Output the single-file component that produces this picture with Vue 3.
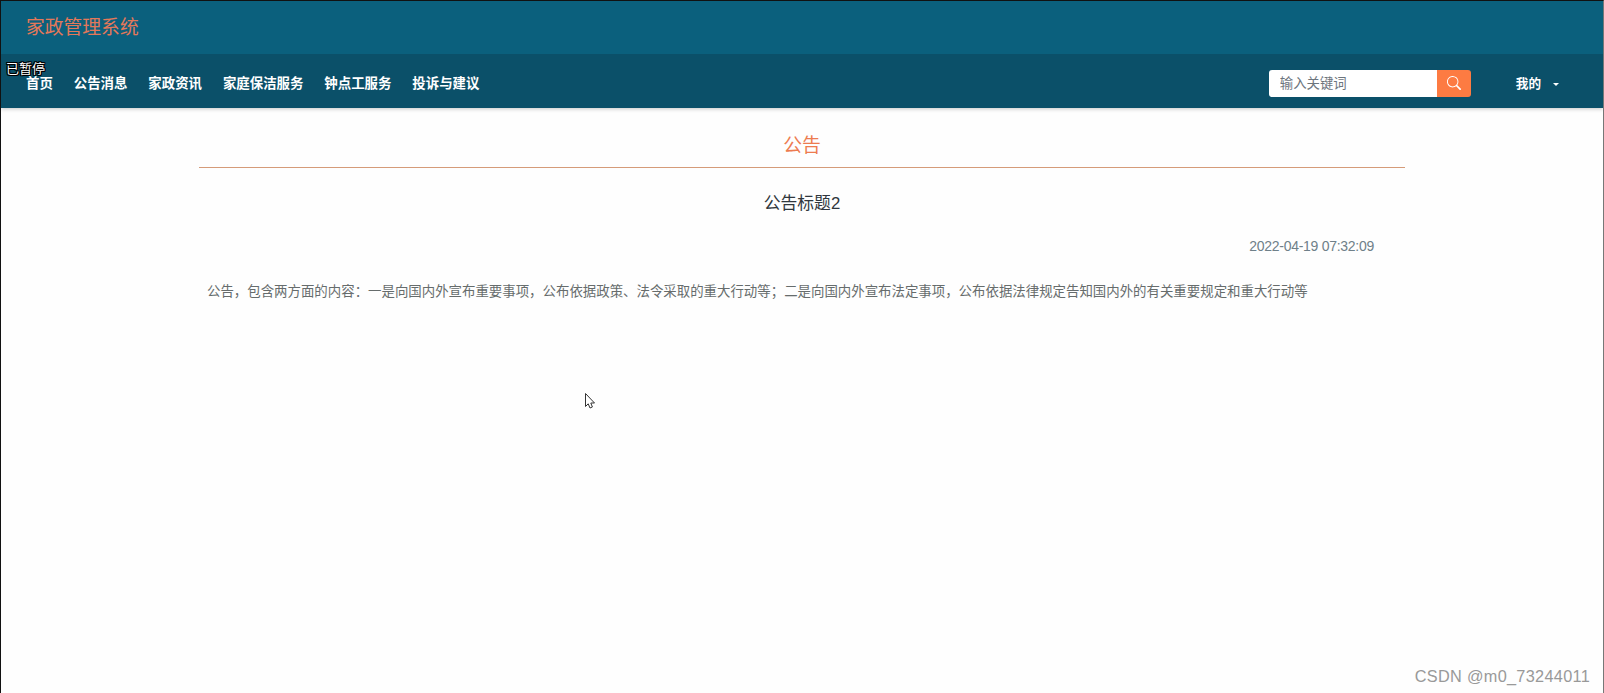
<script setup>
import { ref } from "vue";

const keyword = ref("");

const menu = ["首页", "公告消息", "家政资讯", "家庭保洁服务", "钟点工服务", "投诉与建议"];

const notice = {
    title: "公告标题2",
    created_at: "2022-04-19 07:32:09",
    content: "公告，包含两方面的内容：一是向国内外宣布重要事项，公布依据政策、法令采取的重大行动等；二是向国内外宣布法定事项，公布依据法律规定告知国内外的有关重要规定和重大行动等",
};
</script>

<template>
    <div class="page">
        <header class="header">
            <div class="brand">家政管理系统</div>
            <nav class="navbar">
                <a v-for="item in menu" :key="item" class="nav-link">{{ item }}</a>

                <div class="search">
                    <input v-model="keyword" class="search-input" type="text" placeholder="输入关键词">
                    <button class="search-btn">
                        <svg width="14" height="14" viewBox="0 0 16 16" fill="currentColor">
                            <path d="M11.742 10.344a6.5 6.5 0 1 0-1.397 1.398h-.001c.03.04.062.078.098.115l3.85 3.85a1 1 0 0 0 1.415-1.414l-3.85-3.85a1.007 1.007 0 0 0-.115-.1zM12 6.5a5.5 5.5 0 1 1-11 0 5.5 5.5 0 0 1 11 0z" />
                        </svg>
                    </button>
                </div>

                <a class="user">我的<span class="caret"></span></a>
            </nav>
        </header>

        <!-- 公告详情 -->
        <main class="container">
            <h1 class="heading">公告</h1>
            <h2 class="title">{{ notice.title }}</h2>
            <div class="time">{{ notice.created_at }}</div>
            <p class="content">{{ notice.content }}</p>
        </main>

        <div class="paused">已暂停</div>
        <svg class="cursor" width="12" height="18" viewBox="0 0 12 18">
            <path d="M1.500 1.500V14.500L4.200 11.800L6 16L8.400 15L6.800 11H10.500Z" fill="#fff" stroke="#333" stroke-width="1" />
        </svg>
        <div class="watermark">CSDN @m0_73244011</div>
    </div>
</template>

<style>
body {
    margin: 0;
    overflow: hidden;
}
</style>

<style scoped>
.page {
    position: relative;
    box-sizing: border-box;
    width: 100vw;
    height: 100vh;
    overflow: hidden;
    background: #fefefe;
    border: 1px solid #111;
    border-right-color: #777;
    border-bottom: none;
    font-family: "Liberation Sans", "Noto Sans CJK SC", sans-serif;
    font-size: 13.43px;
}

.header {
    color: #fff;
    box-shadow: 0 1px 4px rgba(0, 0, 0, 0.22);
}

.brand {
    box-sizing: border-box;
    height: 53px;
    line-height: 53px;
    padding-left: 25px;
    background: #0b607d;
    color: #e47859;
    font-size: 18.8px;
}

.navbar {
    box-sizing: border-box;
    display: flex;
    align-items: center;
    height: 54px;
    padding: 4px 44px 0 25px;
    background: #0b5069;
}

.nav-link {
    margin-right: 20.9px;
    padding-bottom: 3px;
    font-weight: bold;
    white-space: nowrap;
}

.search {
    display: flex;
    width: 202px;
    height: 27px;
    margin-left: auto;
    margin-right: 45px;
    border-radius: 3px;
    overflow: hidden;
}

.search-input {
    flex: 1;
    min-width: 0;
    box-sizing: border-box;
    padding: 0 11px;
    border: none;
    outline: none;
    background: #fff;
    font-family: inherit;
    font-size: 13.4px;
}

.search-input::placeholder {
    color: #6c757d;
}

.search-btn {
    display: flex;
    align-items: center;
    justify-content: center;
    width: 34px;
    padding: 0;
    border: none;
    background: #fd7b42;
    color: #fff;
}

.user {
    display: flex;
    align-items: center;
    padding-bottom: 1px;
    font-size: 12.6px;
    font-weight: bold;
}

.caret {
    margin: 3px 0 0 12px;
    border: 3.5px solid transparent;
    border-top-color: #fff;
    border-bottom: none;
}

.container {
    width: 1206px;
    margin: 0 auto;
}

.heading {
    height: 60px;
    box-sizing: border-box;
    margin: 0;
    padding-top: 24px;
    border-bottom: 1px solid #d59b79;
    color: #ed7b50;
    font-size: 18.8px;
    font-weight: normal;
    line-height: 28px;
    text-align: center;
}

.title {
    margin: 24px 0 0;
    color: #30373d;
    font-size: 16.8px;
    font-weight: normal;
    line-height: 24px;
    text-align: center;
}

.time {
    margin-top: 20px;
    padding-right: 31px;
    color: #6f8089;
    font-size: 14px;
    letter-spacing: -0.28px;
    line-height: 20px;
    text-align: right;
}

.content {
    margin: 26px 0 0;
    padding-left: 8px;
    color: #666c6c;
    line-height: 20px;
    white-space: nowrap;
}

.paused {
    position: absolute;
    top: 59px;
    left: 5px;
    color: #fff;
    font-size: 13px;
    line-height: 18px;
    text-shadow: 1px 0 #000, -1px 0 #000, 0 1px #000, 0 -1px #000, 1px 1px #000, -1px -1px #000, 1px -1px #000, -1px 1px #000;
}

.cursor {
    position: absolute;
    top: 391px;
    left: 583px;
}

.watermark {
    position: absolute;
    right: 13px;
    bottom: 5px;
    color: #999;
    font-size: 16.3px;
    letter-spacing: 0.3px;
    line-height: 24px;
}
</style>
